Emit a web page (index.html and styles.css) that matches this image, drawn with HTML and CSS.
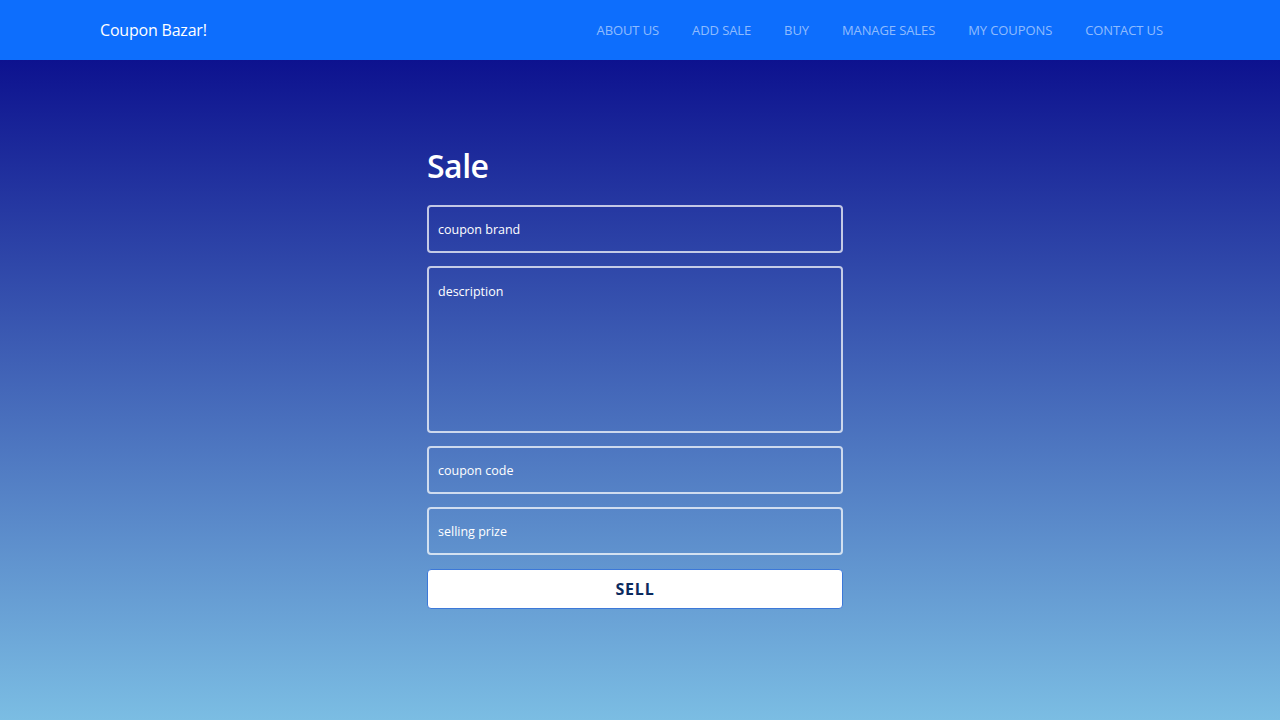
FILE: index.html
```html
<!DOCTYPE html>
<html lang="en">
<head>
<meta charset="utf-8">
<title>Coupon Bazar!</title>
<link rel="stylesheet" href="styles.css">
</head>
<body>
<nav class="navbar">
  <a class="brand" href="#">Coupon Bazar!</a>
  <ul class="nav-links">
    <li><a href="#">ABOUT US</a></li>
    <li><a href="#">ADD SALE</a></li>
    <li><a href="#">BUY</a></li>
    <li><a href="#">MANAGE SALES</a></li>
    <li><a href="#">MY COUPONS</a></li>
    <li><a href="#">CONTACT US</a></li>
  </ul>
</nav>
<main class="page">
  <form class="sale-form">
    <h1 class="title">Sale</h1>
    <input class="field" type="text" placeholder="coupon brand">
    <textarea class="field area" placeholder="description"></textarea>
    <input class="field" type="text" placeholder="coupon code">
    <input class="field" type="text" placeholder="selling prize">
    <button class="sell" type="button">SELL</button>
  </form>
</main>
</body>
</html>
```
FILE: styles.css
```css
* { box-sizing: border-box; }
html, body { margin: 0; padding: 0; }
body {
  font-family: "Open Sans", "Noto Sans", sans-serif;
  width: 1280px;
  height: 720px;
  overflow: hidden;
}
.navbar {
  height: 60px;
  background: #0d6efd;
  display: flex;
  align-items: center;
  justify-content: space-between;
  padding: 0 117px 0 100px;
}
.brand {
  color: #fff;
  text-decoration: none;
  font-size: 16px;
  letter-spacing: -0.2px;
}
.nav-links {
  list-style: none;
  margin: 0;
  padding: 0 0 2px 0;
  display: flex;
  gap: 33px;
}
.nav-links a {
  color: rgba(255,255,255,0.55);
  text-decoration: none;
  font-size: 13px;
  letter-spacing: -0.1px;
}
.page {
  height: 660px;
  background: linear-gradient(180deg, #0d128f 0%, #7bbde3 100%);
  display: flex;
  justify-content: center;
  padding: 84px 10px 0 0;
}
.sale-form {
  width: 416px;
  display: flex;
  flex-direction: column;
  gap: 13px;
}
.title {
  color: #fff;
  font-size: 32px;
  font-weight: 600;
  margin: 0 0 5px 0;
  line-height: 43px;
  letter-spacing: -0.5px;
}
.field {
  height: 48px;
  background: transparent;
  border: 2px solid rgba(255,255,255,0.72);
  border-radius: 4px;
  color: #fff;
  font-family: inherit;
  font-size: 12.5px;
  padding: 0 9px;
  outline: none;
}
.field::placeholder { color: #fff; opacity: 1; }
.area {
  height: 167px;
  padding-top: 15px;
  resize: none;
}
.sell {
  height: 40px;
  margin-top: 1px;
  background: #fff;
  border: 1px solid #3c78d8;
  border-radius: 4px;
  color: #0b2a5e;
  font-family: inherit;
  font-weight: 700;
  font-size: 16px;
  letter-spacing: 0.8px;
}
```
